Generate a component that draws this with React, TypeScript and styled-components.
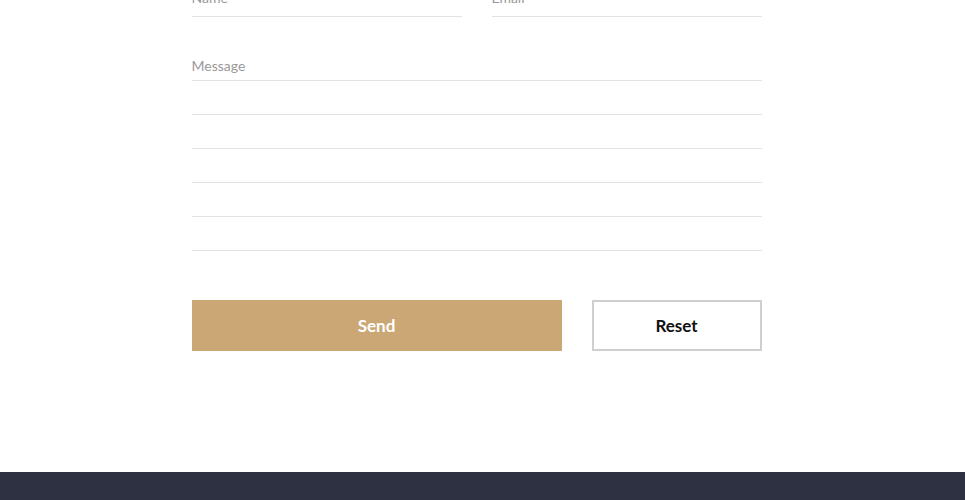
import React, { FC } from "react";
import styled, { createGlobalStyle } from "styled-components";

const GlobalStyle = createGlobalStyle`
    html, body {
        margin: 0;
        padding: 0;
        background: #fff;
        font-family: Lato, "Open Sans", sans-serif;
    }
`;

const App: FC = () => {
    return (
        <>
            <GlobalStyle />
            <ContactSection>
                <Form onSubmit={e => e.preventDefault()}>
                    <Row>
                        <Field>
                            <Input $gap={9} placeholder="Name" />
                        </Field>
                        <Field>
                            <Input $gap={9} type="email" placeholder="Email" />
                        </Field>
                    </Row>
                    <MessageBlock>
                        <Input $gap={5} placeholder="Message" />
                        <LinedArea rows={5} />
                    </MessageBlock>
                    <Actions>
                        <SendButton type="submit">Send</SendButton>
                        <ResetButton type="reset">Reset</ResetButton>
                    </Actions>
                </Form>
            </ContactSection>
            <Footer />
        </>
    );
};

export default App;

const ContactSection = styled.section`
    display: flex;
    justify-content: center;
    margin-top: -12px;
    padding: 0 12px 121px 0;
`;

const Form = styled.form`
    width: 570px;
    display: flex;
    flex-direction: column;
`;

const Row = styled.div`
    display: grid;
    grid-template-columns: 270px 270px;
    column-gap: 30px;
`;

const Field = styled.div`
    display: flex;
    flex-direction: column;
`;

interface InputProps {
    $gap: number;
}

const Input = styled.input<InputProps>`
    border: none;
    border-bottom: 1px solid #e2e2e2;
    padding: 0 0 ${p => p.$gap}px 0;
    margin: 0;
    height: ${p => 20 + p.$gap}px;
    box-sizing: border-box;
    font-family: Lato, sans-serif;
    font-size: 14px;
    line-height: 20px;
    color: #333;
    background: transparent;
    outline: none;

    &::placeholder {
        color: #9a9a9a;
    }
`;

const MessageBlock = styled.div`
    display: flex;
    flex-direction: column;
    margin-top: 39px;
`;

const LinedArea = styled.textarea`
    border: none;
    margin: 0;
    padding: 0;
    height: 170px;
    resize: none;
    outline: none;
    font-family: Lato, sans-serif;
    font-size: 14px;
    line-height: 34px;
    background: repeating-linear-gradient(
        to bottom,
        transparent 0,
        transparent 33px,
        #e2e2e2 33px,
        #e2e2e2 34px
    );
`;

const Actions = styled.div`
    display: flex;
    gap: 30px;
    margin-top: 49px;
`;

const BaseButton = styled.button`
    height: 51px;
    box-sizing: border-box;
    font-family: Lato, sans-serif;
    font-size: 17px;
    font-weight: 700;
    cursor: pointer;
    margin: 0;
`;

const SendButton = styled(BaseButton)`
    width: 370px;
    background: #cca776;
    color: #fff;
    border: none;
`;

const ResetButton = styled(BaseButton)`
    width: 170px;
    background: #fff;
    color: #111;
    border: 2px solid #cfcfcf;
`;

const Footer = styled.footer`
    background: #2e3142;
    height: 220px;
`;
